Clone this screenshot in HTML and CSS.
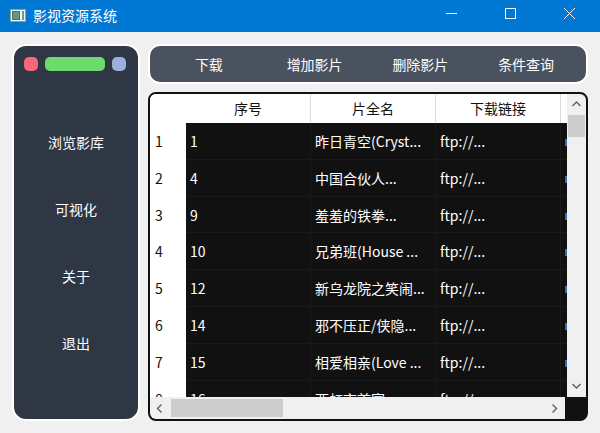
FILE: index.html
```html
<!DOCTYPE html>
<html lang="zh-CN">
<head>
    <meta charset="UTF-8">
    <title>影视资源系统</title>
    <link rel="stylesheet" href="styles.css">
</head>
<body>
    <div class="titlebar">
        <svg class="app-icon" width="16" height="13" viewBox="0 0 16 13">
            <rect x="0.5" y="0.5" width="15" height="12" fill="#f4f4f4" stroke="#9a9a9a"/>
            <rect x="2" y="2" width="8" height="9" fill="#3c7a6a"/>
            <rect x="3" y="3" width="6" height="7" fill="#5a9a8a"/>
            <rect x="12" y="2" width="2" height="9" fill="#6aa080"/>
        </svg>
        <span class="title">影视资源系统</span>
        <div class="controls">
            <svg width="59" height="32" viewBox="0 0 59 32"><line x1="24" y1="13.5" x2="35" y2="13.5" stroke="#fff" stroke-width="1"/></svg>
            <svg width="59" height="32" viewBox="0 0 59 32"><rect x="24.5" y="8.5" width="10" height="10" fill="none" stroke="#fff" stroke-width="1"/></svg>
            <svg width="59" height="32" viewBox="0 0 59 32"><path d="M24 8 L35 19 M35 8 L24 19" stroke="#fff" stroke-width="1"/></svg>
        </div>
    </div>

    <div class="main">
        <div class="sidebar">
            <div class="dots">
                <span class="dot red"></span>
                <span class="dot green"></span>
                <span class="dot blue"></span>
            </div>
            <div class="menu">
                <div class="menu-item">浏览影库</div>
                <div class="menu-item">可视化</div>
                <div class="menu-item">关于</div>
                <div class="menu-item">退出</div>
            </div>
        </div>

        <div class="content">
            <div class="toolbar">
                <div class="tool">下载</div>
                <div class="tool">增加影片</div>
                <div class="tool">删除影片</div>
                <div class="tool">条件查询</div>
            </div>

            <div class="table-frame">
                <div class="table-view">
                    <div class="table">
                        <div class="row head">
                            <div class="corner-cell"></div>
                            <div class="cell hcell">序号</div>
                            <div class="cell hcell">片全名</div>
                            <div class="cell hcell">下载链接</div>
                            <div class="cell hcell narrow"></div>
                        </div>
                        <div class="row"><div class="rnum">1</div><div class="cell">1</div><div class="cell">昨日青空(Cryst...</div><div class="cell">ftp://...</div><div class="cell narrow"><i class="peek"></i></div></div>
                        <div class="row"><div class="rnum">2</div><div class="cell">4</div><div class="cell">中国合伙人...</div><div class="cell">ftp://...</div><div class="cell narrow"><i class="peek"></i></div></div>
                        <div class="row"><div class="rnum">3</div><div class="cell">9</div><div class="cell">羞羞的铁拳...</div><div class="cell">ftp://...</div><div class="cell narrow"><i class="peek"></i></div></div>
                        <div class="row"><div class="rnum">4</div><div class="cell">10</div><div class="cell">兄弟班(House ...</div><div class="cell">ftp://...</div><div class="cell narrow"><i class="peek"></i></div></div>
                        <div class="row"><div class="rnum">5</div><div class="cell">12</div><div class="cell">新乌龙院之笑闹...</div><div class="cell">ftp://...</div><div class="cell narrow"><i class="peek"></i></div></div>
                        <div class="row"><div class="rnum">6</div><div class="cell">14</div><div class="cell">邪不压正/侠隐...</div><div class="cell">ftp://...</div><div class="cell narrow"><i class="peek"></i></div></div>
                        <div class="row"><div class="rnum">7</div><div class="cell">15</div><div class="cell">相爱相亲(Love ...</div><div class="cell">ftp://...</div><div class="cell narrow"><i class="peek"></i></div></div>
                        <div class="row"><div class="rnum">8</div><div class="cell">16</div><div class="cell">西虹市首富...</div><div class="cell">ftp://...</div><div class="cell narrow"><i class="peek"></i></div></div>
                    </div>
                    <div class="vscroll">
                        <svg width="19" height="16" viewBox="0 0 19 16"><path d="M5.5 10 L9.5 6 L13.5 10" fill="none" stroke="#606060" stroke-width="1.4"/></svg>
                        <div class="vthumb"></div>
                        <div class="vfill"></div>
                        <svg width="19" height="16" viewBox="0 0 19 16"><path d="M5.5 6 L9.5 10 L13.5 6" fill="none" stroke="#606060" stroke-width="1.4"/></svg>
                    </div>
                </div>
                <div class="hbar">
                    <div class="hscroll">
                        <svg width="20" height="21" viewBox="0 0 20 21"><path d="M11.5 6.5 L7.5 10.5 L11.5 14.5" fill="none" stroke="#606060" stroke-width="1.4"/></svg>
                        <div class="hthumb"></div>
                        <div class="hfill"></div>
                        <svg width="20" height="21" viewBox="0 0 20 21"><path d="M7.5 6.5 L11.5 10.5 L7.5 14.5" fill="none" stroke="#606060" stroke-width="1.4"/></svg>
                    </div>
                    <div class="sq"></div>
                </div>
            </div>
        </div>
    </div>
</body>
</html>
```

FILE: styles.css
```css
body {
    margin: 0;
    width: 600px;
    height: 433px;
    overflow: hidden;
    background-color: #f0f0f0;
    font-family: "Noto Sans CJK SC", "Noto Sans", sans-serif;
    font-size: 14px;
}
.titlebar {
    height: 32px;
    background-color: #0078d4;
    color: #fff;
    display: flex;
    align-items: center;
}
.app-icon {
    margin-left: 10px;
    margin-right: 7px;
    margin-top: -2px;
}
.title {
    font-size: 14px;
    margin-top: -2px;
}
.controls {
    margin-left: auto;
    display: flex;
    margin-right: 1px;
}
.main {
    display: flex;
    gap: 8px;
    padding: 12px 12px 12px 12px;
    height: 377px;
}
.sidebar {
    width: 124px;
    border: 2px solid #fff;
    border-radius: 14px;
    background-color: #2f3644;
}
.dots {
    display: flex;
    gap: 7px;
    padding: 11px 10px 0 10px;
}
.dot {
    height: 14px;
    width: 14px;
    border-radius: 5px;
}
.dot.red {
    background-color: #f5677a;
}
.dot.green {
    width: 60px;
    background-color: #6bdc6b;
}
.dot.blue {
    background-color: #9ab0da;
}
.menu {
    margin-top: 38px;
}
.menu-item {
    height: 67px;
    line-height: 67px;
    text-align: center;
    color: #fff;
}
.content {
    flex: 1;
    display: flex;
    flex-direction: column;
    gap: 8px;
}
.toolbar {
    height: 36px;
    border: 2px solid #fff;
    border-radius: 12px;
    background-color: #4a525f;
    display: flex;
    padding: 0 7px 0 6px;
}
.tool {
    flex: 1;
    text-align: center;
    line-height: 36px;
    color: #fff;
}
.table-frame {
    flex: 1;
    border: 2px solid #111;
    border-radius: 8px;
    overflow: hidden;
    background-color: #111;
    display: flex;
    flex-direction: column;
}
.table-view {
    flex: 1;
    display: flex;
    overflow: hidden;
}
.table {
    flex: 1;
    overflow: hidden;
    background-color: #121112;
}
.row {
    display: flex;
    height: 36.8px;
}
.row.head {
    height: 29px;
    background-color: #fff;
}
.corner-cell,
.rnum {
    width: 36px;
    flex: none;
    background-color: #fff;
}
.rnum {
    color: #111;
    padding-left: 5px;
    box-sizing: border-box;
    line-height: 36px;
}
.cell {
    width: 125px;
    flex: none;
    color: #fff;
    padding-left: 4px;
    box-sizing: border-box;
    border-right: 1px solid #1b1a1b;
    border-bottom: 1px solid #1b1a1b;
    line-height: 36px;
    white-space: nowrap;
    overflow: hidden;
}
.cell.narrow {
    width: 6px;
    border-right: none;
}
.peek {
    display: block;
    width: 2px;
    height: 7px;
    margin-top: 16px;
    background-color: #2f6fc8;
}
.hcell {
    color: #111;
    text-align: center;
    padding-left: 0;
    line-height: 29px;
    border-bottom: none;
    border-right: 1px solid #dcdcdc;
}
.hcell.narrow {
    border-right: none;
}
.vscroll {
    width: 19px;
    flex: none;
    background-color: #f0f0f0;
    display: flex;
    flex-direction: column;
    align-items: center;
    padding-top: 2px;
    padding-bottom: 3px;
}
.vthumb {
    width: 17px;
    height: 22px;
    margin-top: 3px;
    background-color: #cdcdcd;
}
.vfill {
    flex: 1;
}
.hbar {
    height: 22px;
    display: flex;
}
.hscroll {
    flex: 1;
    background-color: #f0f0f0;
    display: flex;
    align-items: center;
}
.hthumb {
    width: 112px;
    height: 18px;
    background-color: #cdcdcd;
    margin-left: 1px;
}
.hfill {
    flex: 1;
}
.sq {
    width: 21px;
    background-color: #111;
}
```
